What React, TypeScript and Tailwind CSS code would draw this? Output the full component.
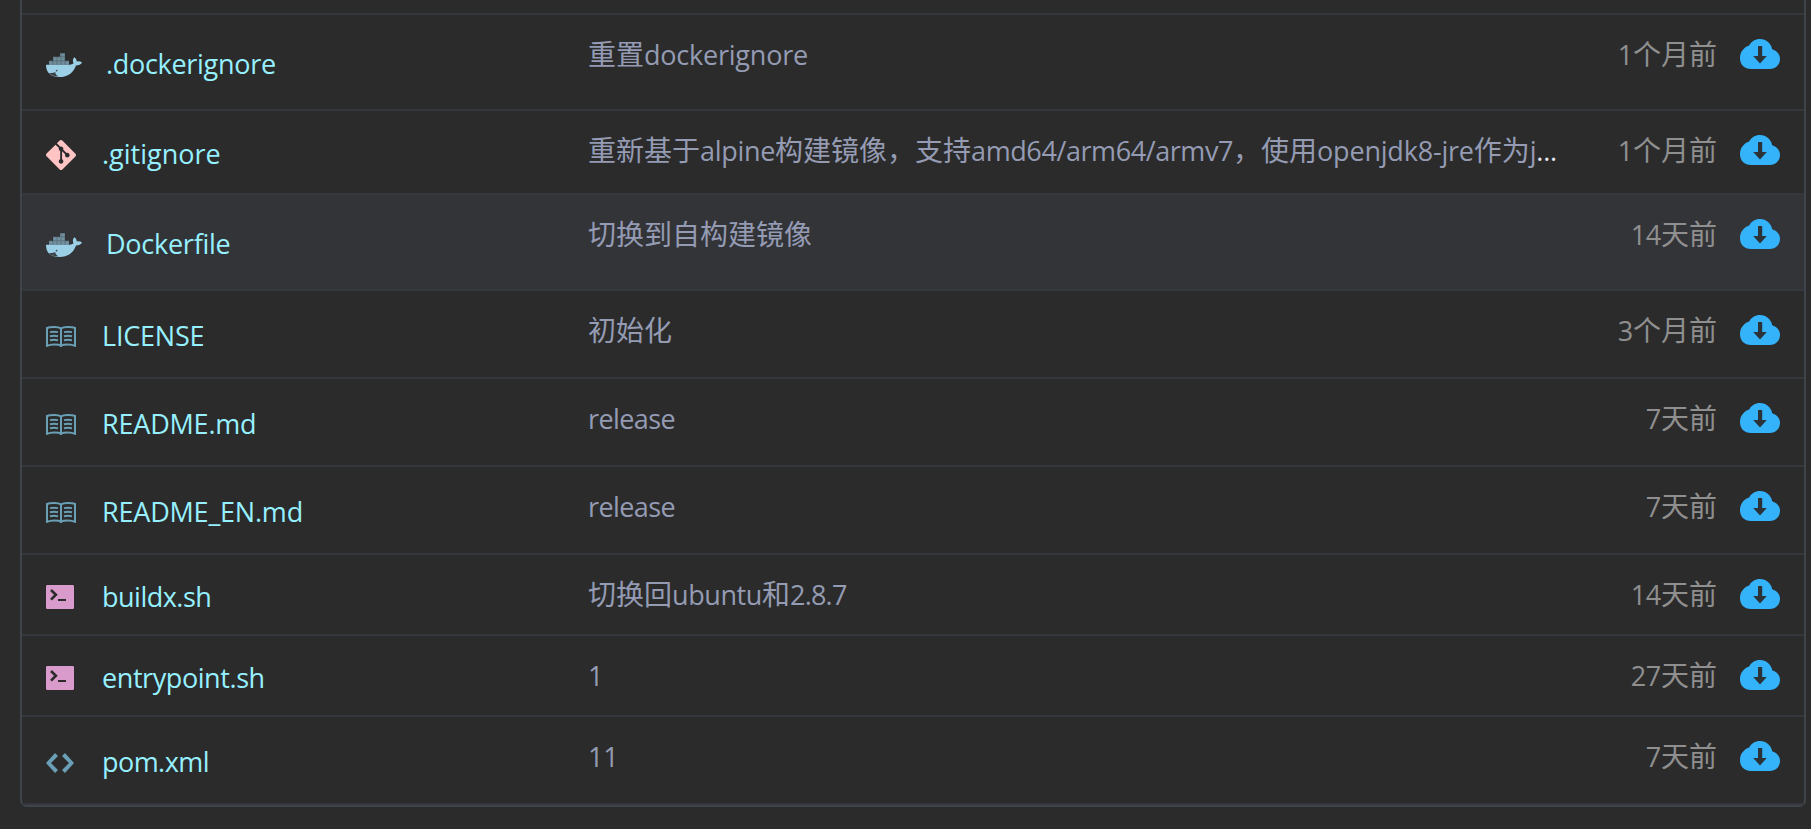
import type { ReactNode } from "react";
import { SiGit } from "react-icons/si";

function DockerIcon() {
  return (
    <svg className="block" width="36" height="24" viewBox="0 0 36 24">
      <g fill="#9bd0e7">
        <path d="M0 11.7H23.6C25.2 11.7 26.6 11.2 27.6 10.3C26.4 8.4 26.7 6 28.2 4.2C29.8 5.2 30.7 6.7 30.8 8.4C32.6 8 34.6 8.3 36 9.4C35 11.4 32.8 12.4 30 12.4C27.6 19.4 22 24 13.4 24C4.6 24 0 19.6 0 11.7Z" />
        <g opacity="0.6">
          <path d="M14 0h5v3.7h-5zM7 3.7h12v4H7zM3 7.7h20v4H3z" />
        </g>
      </g>
      <path d="M3 20C5.4 20.3 7.6 20 9.2 19C9.5 21 10.6 22.6 12.4 23.3C8.6 23.6 5.2 22.6 3 20Z" fill="#2b2b2b" opacity="0.85" />
      <circle cx="10.6" cy="17.6" r="0.9" fill="#2b2b2b" opacity="0.8" />
      <path d="M7 4v7.5M11 4v7.5M15 .2v11.3M19 .2v11.3M7 3.8h12M3.5 7.8h19.5M14 .5h5" stroke="#2b2b2b" strokeWidth="0.8" opacity="0.35" />
    </svg>
  );
}

function BookIcon() {
  return (
    <svg className="block" width="30" height="21" viewBox="0 0 30 21" fill="none" stroke="#6a9fb5" strokeWidth="2">
      <path d="M1 19.8V2C3.4 1 11.6.2 15 2.4C18.4.2 26.6 1 29 2V19.8C25.6 18.2 18 18 15 19.6C12 18 4.4 18.2 1 19.8Z" />
      <path d="M15 2.5V21" />
      <path d="M4 6.1C6.6 5.5 9.4 5.5 12 6.1M4 10.2C6.6 9.6 9.4 9.6 12 10.2M4 14.3C6.6 13.7 9.4 13.7 12 14.3M18 6.1C20.6 5.5 23.4 5.5 26 6.1M18 10.2C20.6 9.6 23.4 9.6 26 10.2M18 14.3C20.6 13.7 23.4 13.7 26 14.3" strokeWidth="2" />
    </svg>
  );
}

function TerminalIcon() {
  return (
    <svg className="block" width="28" height="24" viewBox="0 0 28 24">
      <rect width="28" height="24" rx="1.2" fill="#d99bcb" />
      <path d="M5 5L9.9 9.8L5 14.6" fill="none" stroke="#2b2b2b" strokeWidth="2.6" />
      <path d="M12 14h8v2h-8z" fill="#2b2b2b" />
    </svg>
  );
}

function CodeIcon() {
  return (
    <svg className="block" width="28" height="20" viewBox="0 3 14 10" fill="#6a9fb5">
      <path d="M9.5 3L8 4.5 11.5 8 8 11.5 9.5 13 14 8 9.5 3zm-5 0L0 8l4.5 5L6 11.5 2.5 8 6 4.5 4.5 3z" />
    </svg>
  );
}

function CloudIcon() {
  return (
    <svg className="block" width="40" height="30" viewBox="0 0 40 30">
      <path d="M11 30C4.4 30 0 25.4 0 19.2C0 13 3.8 8.4 9.2 6.6C11.2 2.4 15.2 0 20 0C26.2 0 31.2 4.4 32.2 10.2C37 11.8 40 15.2 40 19.8C40 25.6 36 30 29.6 30Z" fill="#34b3fa" />
      <path d="M18 7h4.2v10h4.6L20 24.4L13.2 17H18Z" fill="#2b3338" />
    </svg>
  );
}

function Latin({ children, className = "tracking-[-0.3px]" }: { children: ReactNode; className?: string }) {
  return <span className={`text-[27px] leading-none font-[380] ${className}`}>{children}</span>;
}

type Row = {
  height: string;
  icon: ReactNode;
  iconClass: string;
  name: string;
  nameClass: string;
  message: ReactNode;
  age: ReactNode;
  active?: boolean;
};

const rows: Row[] = [
  {
    height: "h-[96px]", icon: <DockerIcon />, iconClass: "mt-[38px] w-[60px]",
    name: ".dockerignore", nameClass: "mt-[31px] tracking-[-0.3px]",
    message: <>重置<Latin className="tracking-[-0.22px]">dockerignore</Latin></>, age: <><Latin>1</Latin>个月前</>,
  },
  {
    height: "h-[84px]", icon: <SiGit size={30} color="#ffc4c4" className="block" />, iconClass: "mt-[29px] w-[56px]",
    name: ".gitignore", nameClass: "mt-[25px]",
    message: (
      <>
        重新基于<Latin>alpine</Latin>构建镜像，支持<Latin className="tracking-[-0.42px]">amd64/arm64/armv7</Latin>，使用
        <Latin className="tracking-[-0.2px]">openjdk8-jre</Latin>作为<Latin>j<span className="text-[#e6e9f2]">...</span></Latin>
      </>
    ),
    age: <><Latin>1</Latin>个月前</>,
  },
  {
    height: "h-[96px]", icon: <DockerIcon />, iconClass: "mt-[38px] w-[60px]",
    name: "Dockerfile", nameClass: "mt-[31px] tracking-[-0.25px]",
    message: "切换到自构建镜像", age: <><Latin>14</Latin>天前</>, active: true,
  },
  {
    height: "h-[88px]", icon: <BookIcon />, iconClass: "mt-[35px] w-[56px]",
    name: "LICENSE", nameClass: "mt-[27px] tracking-[-0.2px]",
    message: "初始化", age: <><Latin>3</Latin>个月前</>,
  },
  {
    height: "h-[88px]", icon: <BookIcon />, iconClass: "mt-[35px] w-[56px]",
    name: "README.md", nameClass: "mt-[27px] tracking-[-0.2px]",
    message: <Latin className="tracking-[-0.6px]">release</Latin>, age: <><Latin>7</Latin>天前</>,
  },
  {
    height: "h-[88px]", icon: <BookIcon />, iconClass: "mt-[35px] w-[56px]",
    name: "README_EN.md", nameClass: "mt-[27px] tracking-[-0.2px]",
    message: <Latin className="tracking-[-0.6px]">release</Latin>, age: <><Latin>7</Latin>天前</>,
  },
  {
    height: "h-[81px]", icon: <TerminalIcon />, iconClass: "mt-[30px] w-[56px]",
    name: "buildx.sh", nameClass: "mt-[24px] tracking-[-0.5px]",
    message: <>切换回<Latin className="tracking-[-0.4px]">ubuntu</Latin>和<Latin className="tracking-[-0.8px]">2.8.7</Latin></>, age: <><Latin>14</Latin>天前</>,
  },
  {
    height: "h-[81px]", icon: <TerminalIcon />, iconClass: "mt-[30px] w-[56px]",
    name: "entrypoint.sh", nameClass: "mt-[24px] tracking-[-0.42px]",
    message: <Latin>1</Latin>, age: <><Latin>27</Latin>天前</>,
  },
  {
    height: "h-[88px]", icon: <CodeIcon />, iconClass: "mt-[36px] w-[56px]",
    name: "pom.xml", nameClass: "mt-[27px] tracking-[-0.55px]",
    message: <Latin>11</Latin>, age: <><Latin>7</Latin>天前</>,
  },
];

export default function App() {
  return (
    <div className="h-[829px] w-full overflow-hidden bg-[#2b2b2b] pl-5 pr-[5px] font-['Open_Sans','Noto_Sans_CJK_SC',sans-serif]">
      <div className="h-[807px] rounded-b-[7px] border-2 border-t-0 border-[#3f444b] pt-[13px]">
        {rows.map((row) => (
          <div
            key={row.name}
            className={`flex items-start border-t-2 border-[#34383c] pl-6 pr-6 ${row.height} ${row.active ? "bg-[#333438]" : ""}`}
          >
            <div className="flex w-[542px] items-start whitespace-nowrap">
              <div className={`shrink-0 ${row.iconClass}`}>{row.icon}</div>
              <a className={`text-[27px] leading-[36px] font-[380] text-[#96f0ff] ${row.nameClass}`}>{row.name}</a>
            </div>
            <div className="mt-[21px] min-w-0 flex-1 whitespace-nowrap text-[28px] leading-[36px] text-[#949bb3]">{row.message}</div>
            <div className="mt-[21px] mr-[23px] whitespace-nowrap text-[28px] leading-[36px] text-[#8f8f8f]">{row.age}</div>
            <div className="mt-6">
              <CloudIcon />
            </div>
          </div>
        ))}
        <div className="border-t-2 border-[#34383c]" />
      </div>
    </div>
  );
}
